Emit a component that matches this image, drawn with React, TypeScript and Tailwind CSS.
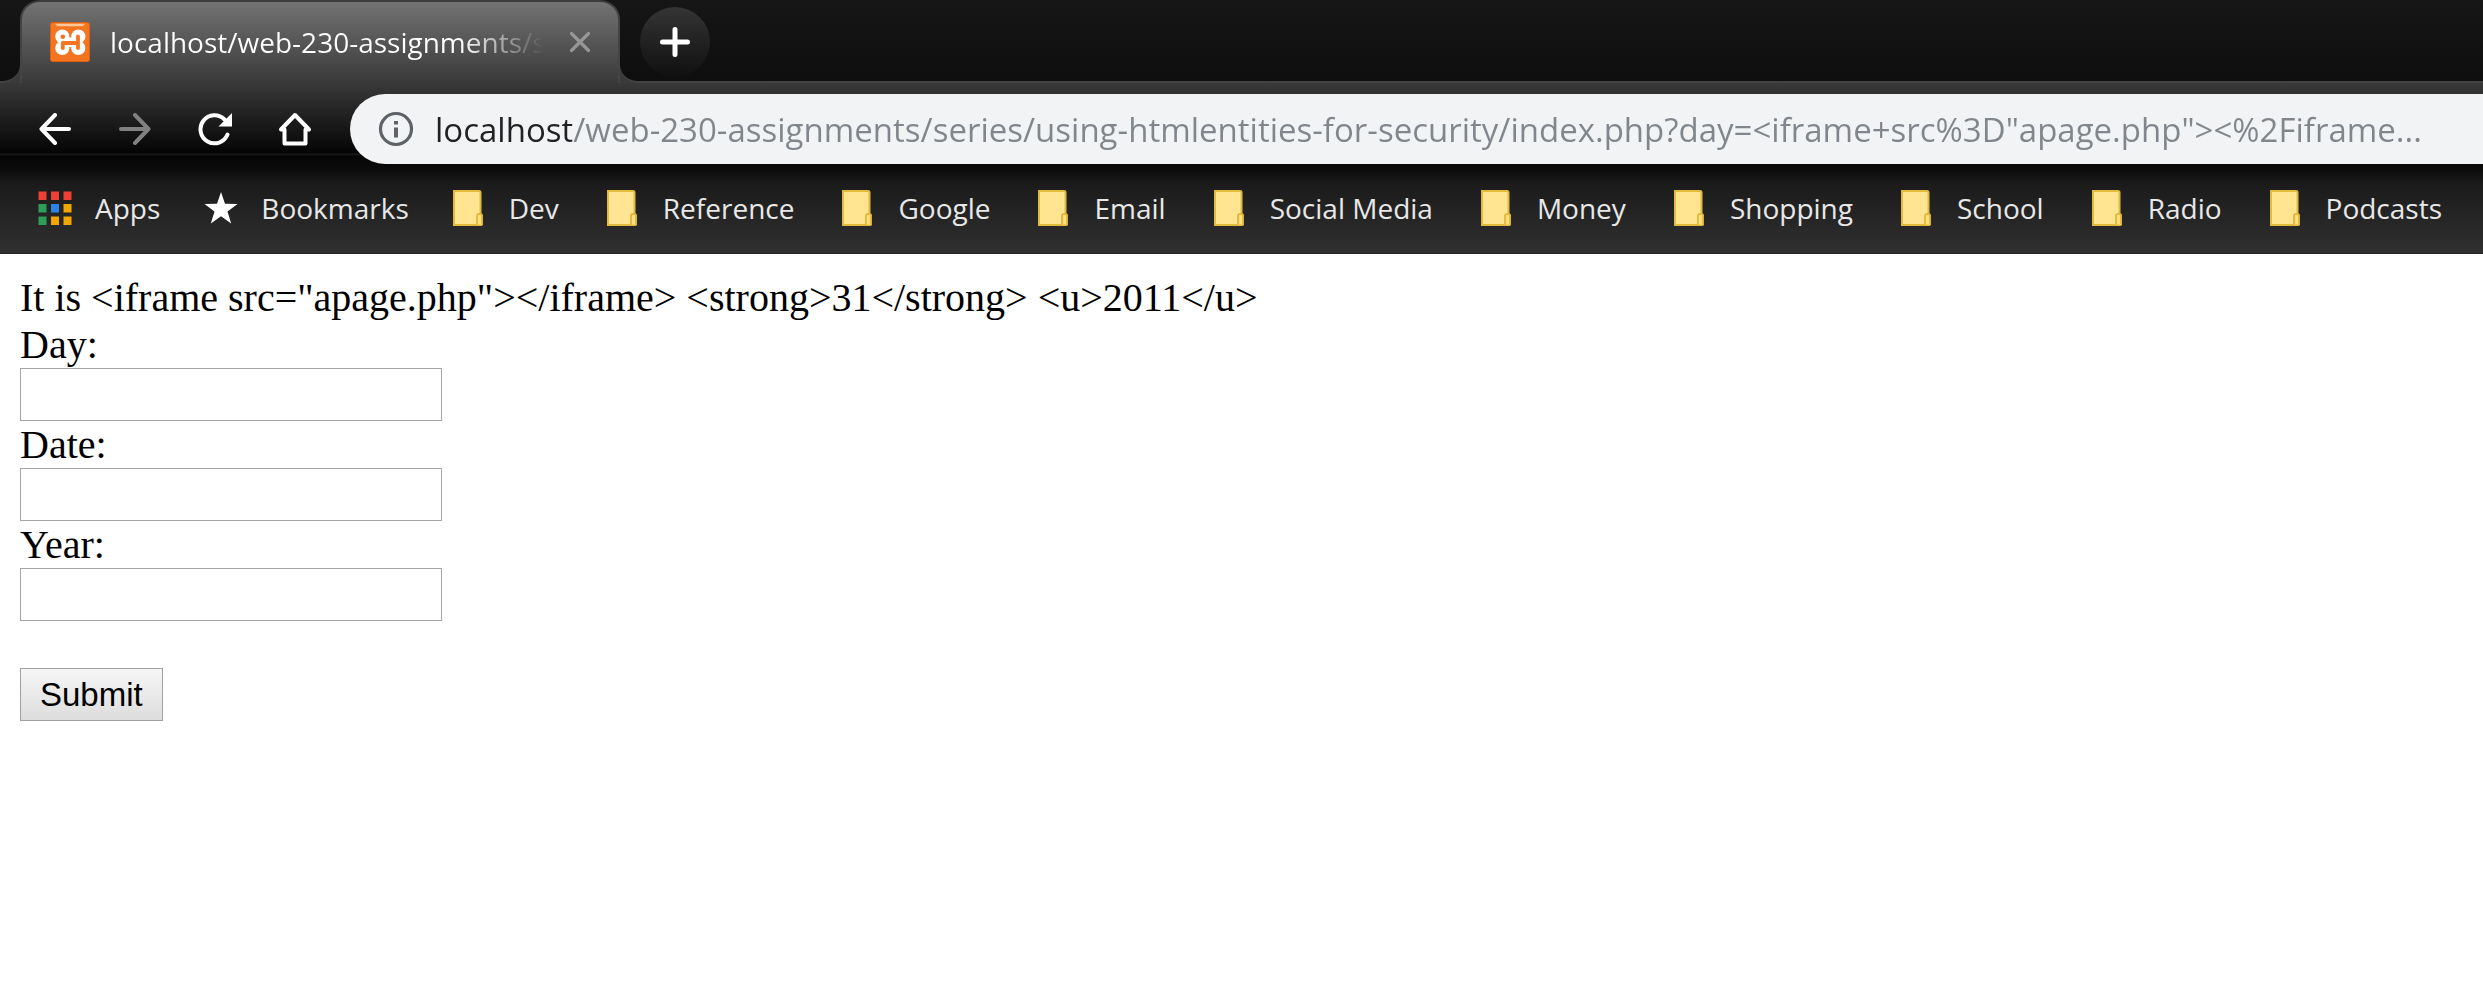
import React from "react";

const URL_TEXT =
  'localhost/web-230-assignments/series/using-htmlentities-for-security/index.php?day=<iframe+src%3D"apage.php"><%2Fiframe...';

const FOLDERS = [
  "Dev",
  "Reference",
  "Google",
  "Email",
  "Social Media",
  "Money",
  "Shopping",
  "School",
  "Radio",
  "Podcasts",
];

const FIELDS = [
  { id: "day", label: "Day:" },
  { id: "date", label: "Date:" },
  { id: "year", label: "Year:" },
];

function XamppIcon() {
  return (
    <svg viewBox="0 0 40 40" className="size-10 shrink-0" aria-hidden="true">
      <rect x="0.5" y="0.5" width="39" height="39" rx="2" fill="#f47420" stroke="#d95f12" />
      <path d="M5 1.800h30l-2 2.400H7z" fill="#ffc79a" />
      <g fill="#fff">
        <circle cx="12.300" cy="14.600" r="7.100" />
        <circle cx="28.300" cy="14.600" r="7.100" />
        <circle cx="12.300" cy="25.900" r="7.100" />
        <circle cx="28.300" cy="25.900" r="7.100" />
        <path d="M12 15.500h16v9.500H12z" />
      </g>
      <circle cx="12.800" cy="14.800" r="2.300" fill="#f47420" />
      <path
        d="M12.800 26V21H28M28 14.500V26"
        fill="none"
        stroke="#f47420"
        strokeWidth="3.800"
        strokeLinecap="round"
        strokeLinejoin="round"
      />
    </svg>
  );
}

function FolderIcon() {
  return (
    <svg viewBox="0 0 30 36" className="h-9 w-[30px] shrink-0" aria-hidden="true">
      <path
        d="M1 1H26Q27.500 1 27.500 2.500V23.500L29.200 25.500V33.500Q29.200 35 28 35H1Z"
        fill="#ffe592"
        stroke="#e3bb3c"
        strokeWidth="2"
      />
      <path d="M24 34.500V25.500Q24 24 25.500 24H27.500Q29 24 29 26V34.500" fill="#ffe07c" stroke="#dcb136" strokeWidth="1.600" />
    </svg>
  );
}

function AppsIcon() {
  const colors = ["#ee4035", "#ee4035", "#ee4035", "#2d9d57", "#2a84e8", "#f2a600", "#2d9d57", "#f2a600", "#f2a600"];
  return (
    <svg viewBox="0 0 34 34" className="size-[34px] shrink-0" aria-hidden="true">
      {colors.map((c, i) => (
        <rect key={i} x={(i % 3) * 12.5 + 0.5} y={Math.floor(i / 3) * 12.5 + 0.5} width="8" height="8.5" fill={c} />
      ))}
    </svg>
  );
}

const navButton = "flex size-10 items-center justify-center";

export default function App() {
  return (
    <div className="min-h-screen bg-white">
      <header className="font-['Open_Sans','Noto_Sans',sans-serif]">
        <div className="flex h-[83px] bg-linear-to-b from-[#161616] to-[#0e0e0e]">
          <div className="w-5 shrink-0 bg-[#3a3a3a]">
            <div className="h-full rounded-br-[18px] border-b-2 border-[#424242] bg-linear-to-b from-[#161616] to-[#0e0e0e]" />
          </div>
          <div className="flex w-[600px] shrink-0 items-center rounded-t-[20px] border-x-2 border-t-2 border-x-[#444] border-t-[#3c3c3c] bg-linear-to-b from-[#737373] to-[#3a3a3a] pl-7 pr-6 pb-[2px]">
            <XamppIcon />
            <span className="ml-5 w-[438px] shrink-0 overflow-hidden bg-linear-to-r from-white from-[80%] to-transparent to-[99%] bg-clip-text text-[28px] leading-10 whitespace-nowrap text-transparent">
              localhost/web-230-assignments/s
            </span>
            <button type="button" aria-label="Close tab" className="ml-4 flex size-8 shrink-0 items-center justify-center">
              <svg viewBox="0 0 20 20" className="size-5" fill="none" stroke="#979797" strokeWidth="3.200" strokeLinecap="round">
                <path d="M1.500 1.500l17 17M18.500 1.500l-17 17" />
              </svg>
            </button>
          </div>
          <div className="min-w-0 flex-1 bg-[#3a3a3a]">
            <div className="flex h-full rounded-bl-[18px] border-b-2 border-[#424242] bg-linear-to-b from-[#161616] to-[#0e0e0e] pl-5 pt-[7px]">
              <button
                type="button"
                aria-label="New tab"
                className="flex size-[70px] items-center justify-center rounded-full bg-linear-to-b from-[#353535] to-[#101010]"
              >
                <svg viewBox="0 0 30 30" className="size-[30px]" fill="none" stroke="#fff" strokeWidth="5" strokeLinecap="round">
                  <path d="M15 2.500v25M2.500 15h25" />
                </svg>
              </button>
            </div>
          </div>
        </div>

        <div className="bg-[linear-gradient(to_bottom,#393939_0px,#050505_69px,#050505_70px,#1c1c1c_71px,#141414_72px,#060606_73px,#0a0a0a_85px,#1b1b1b_101px,#303030_170px,#1c1c1c_171px)]">
          <div className="flex items-center pt-[11px]">
            <nav className="flex w-[350px] shrink-0 gap-10 pl-[35px]">
              <button type="button" aria-label="Back" className={navButton}>
                <svg viewBox="0 0 32 32" className="size-8" fill="none" stroke="#fff" strokeWidth="4" strokeLinecap="round" strokeLinejoin="round">
                  <path d="M30 16H2.500M16 2L2.500 16L16 30" />
                </svg>
              </button>
              <button type="button" aria-label="Forward" className={navButton}>
                <svg viewBox="0 0 32 32" className="size-8" fill="none" stroke="#808080" strokeWidth="4" strokeLinecap="round" strokeLinejoin="round">
                  <path d="M2 16H29.500M16 2L29.500 16L16 30" />
                </svg>
              </button>
              <button type="button" aria-label="Reload" className={navButton}>
                <svg viewBox="0 0 34 34" className="size-[34px]" fill="none" stroke="#fff" strokeWidth="4" strokeLinecap="round">
                  <path d="M29.500 22.500A14 14 0 1 1 26.500 7.500" />
                  <path d="M34 1V14.500H20.500Z" fill="#fff" stroke="none" />
                </svg>
              </button>
              <button type="button" aria-label="Home" className={navButton}>
                <svg viewBox="0 0 32 34" className="h-[34px] w-8" fill="none" stroke="#fff" strokeWidth="4" strokeLinejoin="round" strokeLinecap="round">
                  <path d="M2 17.500L16 3L30 17.500H26.500V31.500H5.500V17.500Z" />
                </svg>
              </button>
            </nav>
            <div className="flex h-[70px] min-w-0 flex-1 items-center rounded-l-full bg-[#f1f3f4] pl-7">
              <svg viewBox="0 0 36 36" className="size-9 shrink-0" fill="none" aria-hidden="true">
                <circle cx="18" cy="18" r="15.500" stroke="#5f6368" strokeWidth="3.200" />
                <path d="M16 16.500h4v10h-4zM16 10h4v3.600h-4z" fill="#5f6368" />
              </svg>
              <input
                type="text"
                aria-label="Address"
                defaultValue={URL_TEXT}
                className="ml-[21px] h-full min-w-0 flex-1 bg-[linear-gradient(to_right,#202124_137px,#80868b_137px)] bg-clip-text text-[33px] text-transparent outline-none"
              />
            </div>
          </div>

          <nav className="flex h-[90px] items-center gap-11 overflow-hidden pb-[2px] pl-[38px] text-[28px] whitespace-nowrap text-[#e8e8e8]">
            <a href="#apps" className="flex shrink-0 items-center gap-[23px]">
              <AppsIcon />
              Apps
            </a>
            <a href="#bookmarks" className="flex shrink-0 items-center gap-[23px]">
              <svg viewBox="0 0 34 32" className="h-8 w-[34px] shrink-0" aria-hidden="true">
                <path d="M17 0L21 11.800L33.500 12L23.500 19.500L27.200 31.500L17 24.300L6.800 31.500L10.500 19.500L0.500 12L13 11.800Z" fill="#fff" />
              </svg>
              Bookmarks
            </a>
            <div className="flex shrink-0 gap-12">
              {FOLDERS.map((name) => (
                <a key={name} href={"#" + name.toLowerCase().replace(" ", "-")} className="flex shrink-0 items-center gap-[26px]">
                  <FolderIcon />
                  {name}
                </a>
              ))}
            </div>
          </nav>
        </div>
      </header>

      <main className="p-5 font-['Liberation_Serif',serif] text-[40px] leading-[47px] text-black">
        <p>{'It is <iframe src="apage.php"></iframe> <strong>31</strong> <u>2011</u>'}</p>
        <form onSubmit={(e) => e.preventDefault()}>
          {FIELDS.map((f) => (
            <div key={f.id}>
              <label htmlFor={f.id} className="block w-fit">
                {f.label}
              </label>
              <input
                id={f.id}
                name={f.id}
                type="text"
                className="block h-[53px] w-[422px] border border-[#a5a5a5] bg-white px-1 font-['Liberation_Sans',sans-serif] text-[33px]"
              />
            </div>
          ))}
          <button
            type="submit"
            className="mt-[47px] block h-[53px] border border-[#a0a0a0] bg-linear-to-b from-[#f6f6f6] to-[#dddddd] px-[19px] font-['Liberation_Sans',sans-serif] text-[33px] leading-[49px]"
          >
            Submit
          </button>
        </form>
      </main>
    </div>
  );
}
